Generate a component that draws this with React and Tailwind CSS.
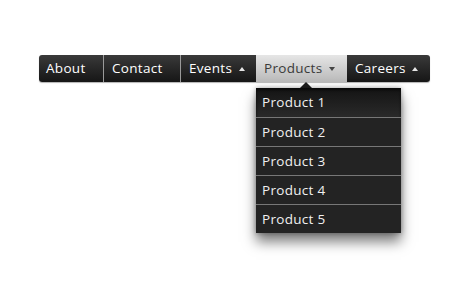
import React from "react";

const Up = ({ color = "#e5e5e5" }) => (
  <svg width="6" height="4" viewBox="0 0 6 4" className="block">
    <polygon points="0,4 3,0 6,4" fill={color} />
  </svg>
);

const Down = ({ color = "#444" }) => (
  <svg width="6" height="4" viewBox="0 0 6 4" className="block">
    <polygon points="0,0 6,0 3,4" fill={color} />
  </svg>
);

const products = ["Product 1", "Product 2", "Product 3", "Product 4", "Product 5"];

const App = () => {
  return (
    <div className="w-[474px] h-[287px] bg-white overflow-hidden" style={{ fontFamily: "'Open Sans', sans-serif" }}>
      <div className="ml-[39px] mt-[55px] flex h-[27px] w-[391px] rounded-[3px] bg-gradient-to-b from-[#3a3a3a] to-[#161616] text-[13.5px] text-white tracking-[0.3px] shadow-[0_1px_1px_rgba(0,0,0,0.3)]">
        {/* ABOUT */}
        <div className="flex items-center w-[65px] pl-[7px] border-r border-[#9a9a9a]">About</div>
        {/* CONTACT */}
        <div className="flex items-center w-[77px] pl-[8px] border-r border-[#9a9a9a]">Contact</div>
        {/* EVENTS */}
        <div className="flex items-center w-[75px] pl-[8px]">
          Events
          <span className="ml-auto mr-[11px]"><Up /></span>
        </div>
        {/* PRODUCTS (open) */}
        <div className="relative flex items-center w-[91px] pl-[8px] bg-gradient-to-b from-[#e6e6e6] to-[#b9b9b9] text-[#3a3a3a]">
          Products
          <span className="ml-auto mr-[12px]"><Down /></span>
          <div className="absolute left-[44px] top-[27px] w-0 h-0 border-l-[6px] border-r-[6px] border-b-[6px] border-l-transparent border-r-transparent border-b-[#1e1e1e]" />
          <div className="absolute left-0 top-[33px] w-[145px] bg-[#232323] text-[#f0f0f0] shadow-[0_9px_12px_rgba(0,0,0,0.5),0_0_5px_rgba(0,0,0,0.35)] z-10">
            {products.map((p, i) => (
              <div
                key={p}
                className={`h-[29px] flex items-center pl-[6px] ${i > 0 ? "border-t border-[#777]" : ""} ${
                  i === 0 ? "bg-gradient-to-b from-[#141414] to-[#2a2a2a] shadow-[inset_0_2px_3px_rgba(0,0,0,0.6)]" : ""
                }`}
              >
                {p}
              </div>
            ))}
          </div>
        </div>
        {/* CAREERS */}
        <div className="flex items-center flex-1 pl-[8px]">
          Careers
          <span className="ml-auto mr-[12px]"><Up /></span>
        </div>
      </div>
    </div>
  );
};

export default App;
